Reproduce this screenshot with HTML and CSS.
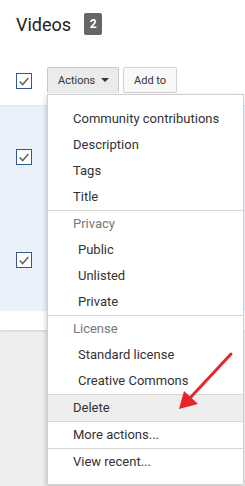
FILE: index.html
```html
<!DOCTYPE html>
<html lang="en">
<head>
  <meta charset="UTF-8">
  <title>Videos</title>
  <link rel="stylesheet" href="styles.css">
</head>
<body>
  <div class="card">
    <div class="header">
      <h1>Videos</h1>
      <span class="badge">2</span>
    </div>

    <div class="toolbar">
      <span class="check">
        <svg viewBox="0 0 16 16" width="16" height="16"><path d="M3 8.5 L6.5 12 L13 4.5" fill="none" stroke="#666" stroke-width="1.8"/></svg>
      </span>
      <button class="btn btn-active">Actions <span class="caret"></span></button>
      <button class="btn">Add to</button>
    </div>

    <div class="rows">
      <div class="row">
        <span class="check">
          <svg viewBox="0 0 16 16" width="16" height="16"><path d="M3 8.5 L6.5 12 L13 4.5" fill="none" stroke="#666" stroke-width="1.8"/></svg>
        </span>
      </div>
      <div class="row">
        <span class="check">
          <svg viewBox="0 0 16 16" width="16" height="16"><path d="M3 8.5 L6.5 12 L13 4.5" fill="none" stroke="#666" stroke-width="1.8"/></svg>
        </span>
      </div>
    </div>
    <div class="card-foot"></div>
  </div>

  <!-- Actions dropdown -->
  <div class="menu">
    <div class="menu-section first">
      <div class="item">Community contributions</div>
      <div class="item">Description</div>
      <div class="item">Tags</div>
      <div class="item">Title</div>
    </div>
    <div class="menu-section">
      <div class="item heading">Privacy</div>
      <div class="item sub">Public</div>
      <div class="item sub">Unlisted</div>
      <div class="item sub">Private</div>
    </div>
    <div class="menu-section">
      <div class="item heading">License</div>
      <div class="item sub">Standard license</div>
      <div class="item sub">Creative Commons</div>
    </div>
    <div class="menu-section">
      <div class="item hover">Delete</div>
    </div>
    <div class="menu-section">
      <div class="item">More actions...</div>
    </div>
    <div class="menu-section">
      <div class="item">View recent...</div>
    </div>
  </div>

  <!-- annotation arrow -->
  <svg class="arrow" width="245" height="486" viewBox="0 0 245 486">
    <line x1="231" y1="354" x2="190" y2="398" stroke="#e8262a" stroke-width="3" stroke-linecap="round"/>
    <polygon points="179,409 184,391 198,404" fill="#e8262a"/>
  </svg>
</body>
</html>
```

FILE: styles.css
```css
body {
  margin: 0;
  font-family: Roboto, "Liberation Sans", sans-serif;
  color: #333;
  background-color: #eeeeee;
  height: 486px;
  overflow: hidden;
  position: relative;
}

.card {
  background-color: #fff;
  box-shadow: 0 1px 2px rgba(0, 0, 0, 0.12);
}

.header {
  display: flex;
  align-items: center;
  height: 48px;
  padding-left: 16px;
}
.header h1 {
  margin: 0;
  font-size: 18px;
  font-weight: 400;
  color: #222;
}
.badge {
  margin-left: 13px;
  width: 18px;
  height: 22px;
  border-radius: 2px;
  background-color: #666;
  color: #fff;
  font-size: 12px;
  font-weight: 700;
  display: flex;
  align-items: center;
  justify-content: center;
}

.toolbar {
  display: flex;
  align-items: flex-start;
  padding: 19px 0 12px 16px;
  border-bottom: 1px solid #e4e4e4;
}
.check {
  width: 14px;
  height: 14px;
  border: 1px solid #35598f;
  display: flex;
  align-items: center;
  justify-content: center;
  background-color: #fff;
}
.check svg {
  width: 14px;
  height: 14px;
}
.toolbar .check {
  margin-top: 6px;
  margin-right: 15px;
}
.btn {
  height: 26px;
  margin: 0 4px 0 0;
  padding: 0 10px;
  border: 1px solid #d3d3d3;
  border-radius: 2px;
  background-color: #f8f8f8;
  font-family: Roboto, "Liberation Sans", sans-serif;
  font-size: 11px;
  color: #333;
  display: flex;
  align-items: center;
}
.btn-active {
  width: 72px;
  background-color: #ebebeb;
  border-color: #c8c8c8;
  border-bottom-color: #ebebeb;
}
.caret {
  margin-left: 6px;
  width: 0;
  height: 0;
  border-left: 4px solid transparent;
  border-right: 4px solid transparent;
  border-top: 4px solid #333;
}

.rows {
  background-color: #eaf1fa;
}
.row {
  height: 102px;
  padding-left: 16px;
  display: flex;
  align-items: center;
}
.row:last-child {
  height: 103px;
}

.card-foot {
  height: 19px;
}

.menu {
  position: absolute;
  top: 94px;
  left: 47px;
  width: 195px;
  height: 389px;
  background-color: #fff;
  border: 1px solid #d0d0d0;
  box-shadow: -1px 2px 5px rgba(0, 0, 0, 0.18);
  font-size: 13px;
}
.menu-section {
  border-bottom: 1px solid #d6d6d6;
}
.menu-section.first {
  padding-top: 11px;
}
.menu-section:last-child {
  border-bottom: none;
}
.item {
  height: 26px;
  line-height: 26px;
  padding-left: 25px;
  color: #333;
  white-space: nowrap;
}
.item.heading {
  color: #777;
}
.item.sub {
  padding-left: 30px;
}
.item.hover {
  background-color: #eeeeee;
}

.arrow {
  position: absolute;
  top: 0;
  left: 0;
  pointer-events: none;
}
```
